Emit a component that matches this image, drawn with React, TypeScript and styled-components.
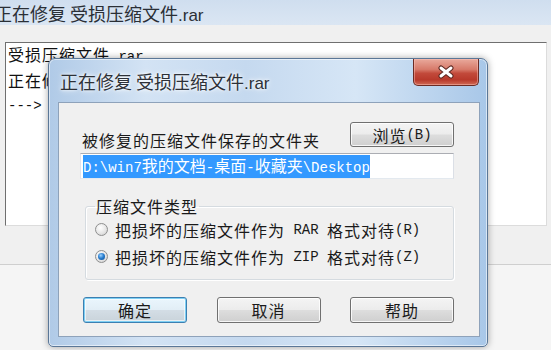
import React from "react";
import styled, { createGlobalStyle, css } from "styled-components";

const GlobalStyle = createGlobalStyle`
  html, body { margin: 0; padding: 0; }
  body {
    width: 551px;
    height: 350px;
    overflow: hidden;
    background: #ffffff;
    font-family: "Noto Sans CJK SC", "Noto Sans", sans-serif;
  }
`;

const Desktop = styled.div`
  position: relative;
  width: 551px;
  height: 350px;
  overflow: hidden;
  display: flex;
  flex-direction: column;
  background: #f0f0f0;
`;

/* ---------- background window ---------- */
const BgTitleBar = styled.div`
  height: 25px;
  flex: none;
  display: flex;
  align-items: center;
  background: linear-gradient(#cfdeef, #dbe6f3);
  overflow: hidden;
`;

const BgTitleText = styled.div`
  margin-left: -6px;
  font-size: 18px;
  color: #2a2f36;
  white-space: nowrap;
`;

const BgToolbar = styled.div`
  height: 17px;
  flex: none;
  background: #f0f0f0;
`;

const BgTextArea = styled.div`
  height: 182px;
  flex: none;
  margin: 0 4px 0 5px;
  border: 1px solid;
  border-color: #6f6f6f #dcdcdc #dcdcdc #6f6f6f;
  background: #ffffff;
  padding: 0 2px;
  font-size: 16px;
  letter-spacing: 1px;
  line-height: 23px;
  color: #111;
  overflow: hidden;
`;

const BgLine = styled.div`
  white-space: nowrap;
`;

const BgGap = styled.div`
  height: 38px;
  flex: none;
`;

const BgStatus = styled.div`
  flex: 1;
  border-top: 1px solid #cfcfcf;
  background: #f5f5f5;
`;

const Latin = styled.span<{ $sans?: boolean }>`
  font-family: ${(p) => (p.$sans ? `"Liberation Sans", sans-serif` : `"Liberation Mono", monospace`)};
  font-size: ${(p) => (p.$sans ? "17px" : "14px")};
  letter-spacing: 0;
  white-space: pre;
`;

/* ---------- dialog ---------- */
const Dialog = styled.div`
  position: absolute;
  left: 48px;
  top: 58px;
  width: 440px;
  height: 289px;
  box-sizing: border-box;
  border: 1px solid #5b7797;
  border-radius: 7px 7px 5px 5px;
  background: linear-gradient(
    to right,
    #b0cae7 0%,
    #d3e3f4 22%,
    #c5d9ef 45%,
    #d6e6f6 70%,
    #a8c7e8 100%
  );
  box-shadow: 0 0 7px rgba(0, 0, 0, 0.35), inset 0 0 0 1px rgba(255, 255, 255, 0.55);
  padding: 0 7px 9px 9px;
  display: flex;
  flex-direction: column;
`;

const DialogTitleBar = styled.div`
  height: 43px;
  flex: none;
  display: flex;
  align-items: center;
`;

const DialogTitle = styled.div`
  padding-left: 2px;
  font-size: 18px;
  color: #2d3138;
  white-space: nowrap;
  text-shadow: 0 0 6px #ffffff, 0 0 3px #ffffff;
`;

const CloseButton = styled.div`
  align-self: flex-start;
  margin-left: auto;
  margin-right: 1px;
  width: 66px;
  height: 27px;
  box-sizing: border-box;
  border: 1px solid #6b2b24;
  border-top: none;
  border-radius: 0 0 5px 5px;
  background: linear-gradient(
    #e9a99c 0%,
    #d77a6a 40%,
    #c24a3b 55%,
    #b8392b 80%,
    #d06a55 100%
  );
  box-shadow: inset 0 0 0 1px rgba(255, 200, 190, 0.45);
  display: flex;
  align-items: center;
  justify-content: center;
`;

const Client = styled.div`
  flex: 1;
  box-sizing: border-box;
  border: 1px solid #8ea2ba;
  background: #f0f0f0;
  padding: 19px 26px 0 21px;
  display: flex;
  flex-direction: column;
  font-size: 16px;
  letter-spacing: 1px;
  color: #1a1a1a;
`;

const FolderRow = styled.div`
  display: flex;
  align-items: flex-end;
  justify-content: space-between;
`;

const FieldLabel = styled.div`
  padding-left: 2px;
  line-height: 18px;
  margin-bottom: -2px;
  white-space: nowrap;
`;

const PushButton = styled.div<{ $default?: boolean }>`
  width: 104px;
  height: 26px;
  box-sizing: border-box;
  border: 1px solid #707070;
  border-radius: 3px;
  background: linear-gradient(#f4f4f4 0%, #ececec 48%, #dddddd 52%, #cfcfcf 100%);
  box-shadow: inset 0 0 0 1px rgba(255, 255, 255, 0.8);
  display: flex;
  align-items: center;
  justify-content: center;
  font-size: 16px;
  letter-spacing: 1px;
  color: #1a1a1a;
  white-space: nowrap;
  ${(p) =>
    p.$default &&
    css`
      border-color: #3c7fb1;
      box-shadow: inset 0 0 0 1px #7fd0f4, inset 0 0 0 2px rgba(255, 255, 255, 0.6);
      background: linear-gradient(#eaf6fd 0%, #e2eef6 48%, #d3dde5 52%, #c9d3da 100%);
    `}
`;

const BrowseButton = styled(PushButton)`
  height: 25px;
  margin-right: -1px;
`;

const PathInput = styled.div`
  margin-top: 6px;
  margin-right: -1px;
  height: 26px;
  box-sizing: border-box;
  border: 1px solid;
  border-color: #abadb3 #dbdfe6 #e3e9ef #e2e3ea;
  background: #ffffff;
  padding-left: 2px;
  display: flex;
  align-items: center;
  white-space: nowrap;
`;

const Selection = styled.span`
  background: #3399ff;
  color: #ffffff;
  line-height: 20px;
  letter-spacing: 0;
  font-size: 16px;
`;

const GroupBox = styled.fieldset`
  margin: 17px -1px 0 5px;
  padding: 0 0 9px 9px;
  border: 1px solid #d5dbe0;
  border-radius: 3px;
  box-shadow: inset 1px 1px 0 #ffffff, 1px 1px 0 #ffffff;
  min-width: 0;
`;

const GroupLegend = styled.legend`
  margin-left: 0;
  padding: 0 1px;
  line-height: 20px;
  color: #1a1a1a;
`;

const RadioRow = styled.div`
  height: 27px;
  display: flex;
  align-items: center;
  white-space: nowrap;
`;

const RadioCircle = styled.span<{ $checked?: boolean }>`
  width: 13px;
  height: 13px;
  flex: none;
  box-sizing: border-box;
  border-radius: 50%;
  border: 1px solid #8e8f8f;
  background: radial-gradient(circle at 40% 35%, #ffffff 0%, #e6e6e6 55%, #c9c9c9 100%);
  margin-right: 7px;
  display: flex;
  align-items: center;
  justify-content: center;
  &::after {
    content: "";
    display: ${(p) => (p.$checked ? "block" : "none")};
    width: 7px;
    height: 7px;
    border-radius: 50%;
    background: radial-gradient(circle at 40% 35%, #9fd3ff 0%, #2a7fd0 45%, #0b4a8f 100%);
  }
`;

const ButtonRow = styled.div`
  margin: 17px -1px 0 3px;
  display: flex;
  justify-content: space-between;
`;

function CloseX() {
  return (
    <svg width="18" height="14" viewBox="0 0 18 14">
      <path d="M4 3 L14 11 M14 3 L4 11" stroke="#5a2620" strokeWidth="5" strokeLinecap="round" />
      <path d="M4 3 L14 11 M14 3 L4 11" stroke="#ffffff" strokeWidth="3" strokeLinecap="round" />
    </svg>
  );
}

export default function App() {
  return (
    <>
      <GlobalStyle />
      <Desktop>
        <BgTitleBar>
          <BgTitleText>
            正在修复 受损压缩文件<Latin $sans>.rar</Latin>
          </BgTitleText>
        </BgTitleBar>
        <BgToolbar />
        <BgTextArea>
          <BgLine>
            受损压缩文件<Latin>.rar</Latin>
          </BgLine>
          <BgLine>正在修复 受损压缩文件</BgLine>
          <BgLine>
            <Latin>{"--->"}</Latin>
          </BgLine>
        </BgTextArea>
        <BgGap />
        <BgStatus />

        <Dialog>
          <DialogTitleBar>
            <DialogTitle>
              正在修复 受损压缩文件<Latin $sans>.rar</Latin>
            </DialogTitle>
            <CloseButton>
              <CloseX />
            </CloseButton>
          </DialogTitleBar>
          <Client>
            <FolderRow>
              <FieldLabel>被修复的压缩文件保存的文件夹</FieldLabel>
              <BrowseButton>
                浏览<Latin>(B)</Latin>
              </BrowseButton>
            </FolderRow>
            <PathInput>
              <Selection>
                <Latin>{"D:\\win7"}</Latin>我的文档<Latin>-</Latin>桌面<Latin>-</Latin>收藏夹<Latin>{"\\Desktop"}</Latin>
              </Selection>
            </PathInput>
            <GroupBox>
              <GroupLegend>压缩文件类型</GroupLegend>
              <RadioRow>
                <RadioCircle />
                把损坏的压缩文件作为<Latin>{" RAR "}</Latin>格式对待<Latin>(R)</Latin>
              </RadioRow>
              <RadioRow>
                <RadioCircle $checked />
                把损坏的压缩文件作为<Latin>{" ZIP "}</Latin>格式对待<Latin>(Z)</Latin>
              </RadioRow>
            </GroupBox>
            <ButtonRow>
              <PushButton $default>确定</PushButton>
              <PushButton>取消</PushButton>
              <PushButton>帮助</PushButton>
            </ButtonRow>
          </Client>
        </Dialog>
      </Desktop>
    </>
  );
}
